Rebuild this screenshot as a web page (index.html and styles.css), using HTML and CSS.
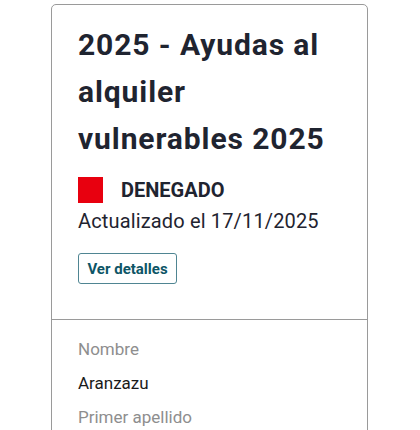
FILE: index.html
```html
<!DOCTYPE html>
<html lang="es">
<head>
<meta charset="utf-8">
<link rel="stylesheet" href="styles.css">
</head>
<body>
<div class="card">
  <div class="card-top">
    <h1 class="title">2025 - Ayudas al alquiler vulnerables 2025</h1>
    <div class="status">
      <span class="status-box"></span>
      <span class="status-text">DENEGADO</span>
    </div>
    <p class="updated">Actualizado el 17/11/2025</p>
    <button class="btn">Ver detalles</button>
  </div>
  <div class="card-body">
    <div class="label">Nombre</div>
    <div class="value">Aranzazu</div>
    <div class="label">Primer apellido</div>
  </div>
</div>
</body>
</html>
```
FILE: styles.css
```css
html, body {
  margin: 0;
  padding: 0;
  background: #fff;
}
body {
  font-family: Roboto, "Liberation Sans", sans-serif;
  color: #1f2430;
}
.card {
  margin: 4px 0 0 51px;
  width: 317px;
  box-sizing: border-box;
  border: 1px solid #9a9a9a;
  border-radius: 5px;
  height: 440px;
}
.card-top {
  padding: 16px 30px 35px 26px;
  border-bottom: 1px solid #9a9a9a;
}
.title {
  margin: 0;
  font-size: 30px;
  font-weight: 700;
  line-height: 47px;
  letter-spacing: 0.9px;
  color: #1f2430;
}
.status {
  display: flex;
  align-items: center;
  gap: 18px;
  margin-top: 15px;
}
.status-box {
  width: 25px;
  height: 26px;
  background: #e8000f;
}
.status-text {
  font-size: 20px;
  font-weight: 700;
  color: #1f2430;
}
.updated {
  margin: 4px 0 0;
  font-size: 20px;
  line-height: 28px;
  letter-spacing: 0.15px;
  color: #1f2430;
}
.btn {
  margin-top: 18px;
  display: block;
  width: 99px;
  height: 31px;
  padding: 0;
  background: #fff;
  border: 1px solid #4f8592;
  border-radius: 3px;
  font-family: Roboto, "Liberation Sans", sans-serif;
  font-size: 15px;
  font-weight: 700;
  color: #0d5566;
}
.card-body {
  padding: 12px 26px 0;
}
.label {
  font-size: 17px;
  line-height: 34px;
  color: #8e8e8e;
}
.value {
  font-size: 17px;
  line-height: 34px;
  color: #1a1a1a;
}
```
